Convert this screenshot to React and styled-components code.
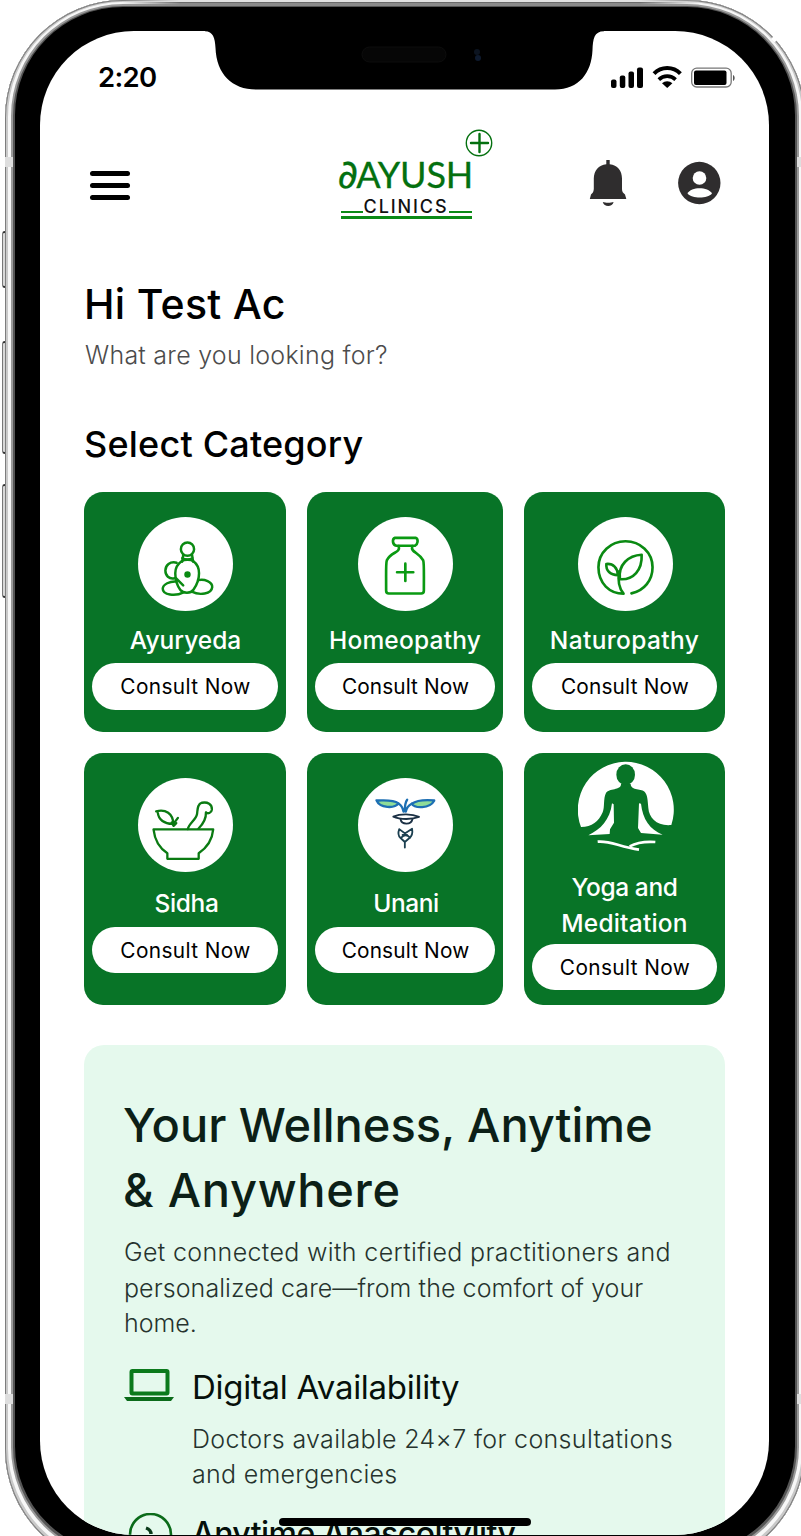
import React from "react";
import styled, { createGlobalStyle } from "styled-components";

const GlobalStyle = createGlobalStyle`
  * { box-sizing: border-box; }
  body {
    margin: 0;
    background: #fff;
    font-family: Inter, "Liberation Sans", sans-serif;
    color: #000;
  }
`;

const Stage = styled.div`
  width: 801px;
  height: 1536px;
  position: relative;
  overflow: hidden;
  background: #fff;
`;

const SideButton = styled.div`
  position: absolute;
  left: 2px;
  top: ${(p) => p.$top}px;
  width: 8px;
  height: ${(p) => p.$height}px;
  border: 1px solid #777;
  border-top: 2px solid #333;
  border-bottom: 2px solid #333;
  border-radius: 3px 0 0 3px;
  background: #d8d8d8;
`;

const Bezel = styled.div`
  position: relative;
  width: 800px;
  height: 1567px;
  margin-left: 5px;
  padding: 31px 36px 32px 35px;
  border-radius: 118px;
  background: #000;
  box-shadow:
    inset 0 0 0 1px #7d7d7d,
    inset 0 -1px 0 3px #c9c9c9,
    inset 0 -2px 0 6px #f7f7f7,
    inset 0 -2px 0 8px #9a9a9a,
    inset 0 -3px 0 10px #555;
`;

const TopEdge = styled.div`
  position: absolute;
  left: 115px;
  right: 105px;
  top: 0;
  height: 7px;
  background: linear-gradient(#e2e2e2 0 2px, #6a6a6a 2px 3px, #8a8a8a 3px 6px, #555 6px 7px);
  mask-image: linear-gradient(90deg, transparent, #000 60px, #000 calc(100% - 60px), transparent);
`;

const EdgeGap = styled.div`
  position: absolute;
  left: 773px;
  top: 34px;
  width: 5px;
  height: 8px;
  background: #fff;
  transform: rotate(45deg);
`;

const Antenna = styled.div`
  position: absolute;
  ${(p) => p.$side}: 0;
  top: ${(p) => p.$top}px;
  width: 8px;
  height: 10px;
  background: #dedede;
`;

const Screen = styled.main`
  position: relative;
  width: 729px;
  height: 1504px;
  overflow: hidden;
  border-radius: 94px;
  background: #fff;
  padding: 0 44px;
`;

const Notch = styled.svg`
  position: absolute;
  left: 165px;
  top: -1px;
`;

const StatusBar = styled.div`
  display: flex;
  justify-content: space-between;
  align-items: center;
  height: 34px;
  margin: 29px -11px 0 14px;
`;

const Clock = styled.span`
  font-size: 27.5px;
  font-weight: 600;
  line-height: 34px;
  letter-spacing: ${(p) => p.$track}px;
`;

const Header = styled.header`
  display: flex;
  justify-content: space-between;
  align-items: flex-start;
  height: 98px;
  margin: 33px 4px 0 6px;
`;

const MenuButton = styled.div`
  display: flex;
  flex-direction: column;
  gap: 7px;
  width: 40px;
  margin-top: 44px;
`;

const MenuBar = styled.span`
  height: 5px;
  border-radius: 3px;
  background: #000;
`;

const Logo = styled.div`
  position: relative;
  width: 134px;
  margin: 30px 0 0 90px;
`;

const LogoName = styled.div`
  display: flex;
  align-items: baseline;
  height: 36px;
  font-family: Lato, sans-serif;
  font-size: 36px;
  font-weight: 400;
  line-height: 35px;
  letter-spacing: ${(p) => p.$track}px;
  color: #04700f;
  -webkit-text-stroke: 0.3px #04700f;
`;

const LogoInitial = styled.span`
  margin-right: -2px;
  font-family: "DejaVu Sans", sans-serif;
  font-size: 40px;
  line-height: 35px;
  letter-spacing: 0;
`;

const LogoSub = styled.div`
  display: flex;
  align-items: flex-end;
  gap: 1px;
  height: 22px;
  margin: 2px 0 0 3px;
  font-size: 18px;
  font-weight: 500;
  line-height: 21px;
  letter-spacing: ${(p) => p.$track}px;
  color: #111;
`;

const LogoDash = styled.span`
  flex: 1;
  height: 2px;
  margin-bottom: 4px;
  background: #0b8a16;
`;

const LogoRule = styled.div`
  height: 2.5px;
  margin: -1px 0 0 3px;
  background: #0b8a16;
`;

const LogoPlus = styled.svg`
  position: absolute;
  right: -21px;
  top: -28px;
`;

const HeaderActions = styled.div`
  display: flex;
  gap: 51px;
  margin-top: 33px;
`;

const Text = styled.span`
  display: block;
  white-space: nowrap;
  letter-spacing: ${(p) => p.$track || 0}px;
`;

const Greeting = styled.h1`
  margin: 54px 0 0;
  font-size: 41px;
  font-weight: 500;
  line-height: 50px;
`;

const Prompt = styled.p`
  margin: 11px 0 0 1px;
  font-size: 25px;
  font-weight: 300;
  line-height: 30px;
  color: #4c4c4c;
`;

const SectionTitle = styled.h2`
  margin: 52px 0 0;
  font-size: 36px;
  font-weight: 500;
  line-height: 44px;
`;

const CategoryGrid = styled.section`
  display: grid;
  grid-template-columns: 202px 196px 201px;
  grid-template-rows: 240px 252px;
  gap: 21px;
  margin-top: 26px;
`;

const Card = styled.article`
  display: flex;
  flex-direction: column;
  align-items: center;
  padding: ${(p) => (p.$tall ? 8 : 25)}px 8px 0;
  border-radius: 19px;
  background: #087427;
`;

const IconDisc = styled.div`
  width: 95px;
  height: 94px;
  margin-left: 1px;
  border-radius: 50%;
  background: ${(p) => (p.$bare ? "transparent" : "#fff")};
  svg { display: block; }
`;

const CardName = styled.h3`
  margin: ${(p) => p.$gap}px 0 0;
  padding-left: ${(p) => p.$nudge || 0}px;
  color: #fff;
  font-size: 24.5px;
  font-weight: 500;
  line-height: 35.5px;
  text-align: center;
`;

const ConsultButton = styled.button`
  width: 100%;
  height: ${(p) => p.$height}px;
  margin-top: ${(p) => p.$gap}px;
  padding: 0 0 0 1px;
  border: 0;
  border-radius: 24px;
  background: #fff;
  color: #000;
  font: 400 20.8px/47px Inter, sans-serif;
`;

const Wellness = styled.section`
  height: 520px;
  margin-top: 40px;
  padding: 47px 40px 0;
  border-radius: 20px 20px 0 0;
  background: #e5f9ed;
`;

const WellnessTitle = styled.h2`
  margin: 0 0 0 -1px;
  font-size: 47px;
  font-weight: 500;
  line-height: 65px;
  color: #0c1f17;
`;

const WellnessText = styled.p`
  margin: 13px 0 0;
  font-size: 25px;
  font-weight: 300;
  line-height: 35.5px;
  color: #26332d;
`;

const Feature = styled.div`
  display: grid;
  grid-template-columns: 50px 1fr;
  column-gap: 18px;
  margin-top: ${(p) => p.$gap}px;
`;

const FeatureTitle = styled.h3`
  margin: 0;
  font-size: ${(p) => p.$size || 33}px;
  font-weight: ${(p) => p.$weight || 420};
  line-height: 42px;
  color: #06100b;
`;

const FeatureText = styled.p`
  margin: 14px 0 0;
  font-size: 25px;
  font-weight: 300;
  line-height: 35.5px;
  color: #26332d;
`;

const HomeBar = styled.div`
  position: absolute;
  left: 239px;
  bottom: 9px;
  width: 252px;
  height: 8px;
  border-radius: 4px;
  background: #000;
`;

const SignalIcons = () => (
  <svg width="126" height="24" viewBox="0 0 126 24">
    <rect x="1" y="14.5" width="5.5" height="8.5" rx="2" />
    <rect x="9.8" y="10.5" width="5.5" height="12.5" rx="2" />
    <rect x="18.5" y="6.5" width="5.5" height="16.5" rx="2" />
    <rect x="27" y="2.5" width="6" height="20.5" rx="2" />
    <g fill="none" stroke="#000" strokeWidth="4">
      <path d="M44 8.600a18.500 18.500 0 0 1 26.400 0" />
      <path d="M48.800 14.600a12 12 0 0 1 16.800 0" strokeWidth="3.600" />
    </g>
    <path d="M52 18.200a7.600 7.600 0 0 1 10.400 0l-5.200 4.800z" />
    <rect x="81.700" y="3.200" width="39.500" height="18.800" rx="5" fill="none" stroke="#777" strokeWidth="1.300" />
    <rect x="84" y="5.500" width="32.500" height="14.500" rx="2" />
    <path d="M123 10v6c2.200-1 2.200-5 0-6z" fill="#555" />
  </svg>
);

const BellIcon = () => (
  <svg width="38" height="48" viewBox="0 0 38 48">
    <path
      d="M17.300 0h3.400v4.200C28.500 5.200 33 10.500 33 18.500V29c0 2.500 1 4 3 5.500L37.300 39H.8L2 34.500C4 33 4.500 31.500 4.800 29V18.500C5 10.500 9.500 5.200 17.300 4.200z"
      fill="#2f2d2e"
    />
    <path d="M13.800 42c2.800 1 7.800 1 10.800 0-1 5.300-9.800 5.300-10.800 0z" fill="#2f2d2e" />
  </svg>
);

const AccountIcon = () => (
  <svg width="43" height="46" viewBox="0 0 43 46">
    <circle cx="21.300" cy="23" r="21.200" fill="#2f2d2e" />
    <circle cx="21.500" cy="18" r="6.800" fill="#fff" />
    <path d="M9.500 33.500C13 26.500 30 26.500 34 33.500c-4.500 5.300-20 5.300-24.500 0z" fill="#fff" />
  </svg>
);

const AyurvedaIcon = () => (
  <svg width="95" height="94" viewBox="175 96 288 284" fill="none" stroke="#0a8a12" strokeWidth="7.500" strokeLinejoin="round" strokeLinecap="round">
    <circle cx="325" cy="193" r="20" />
    <path d="M312 211l-3 20M339 211l3 20M309 220c10 5 22 5 32 0" />
    <path d="M308 229c8-5 28-5 35 1 12 9 17 21 17 36 0 20-6 35-17 50-8 12-31 12-40 0-10-14-15-29-15-50 0-15 7-28 20-37z" />
    <circle cx="325" cy="270" r="6" fill="#0a8a12" />
    <path d="M292 234c-20-5-34 8-34 24 0 15 11 27 28 23M290 281l22 22" />
    <path d="M292 291c-20-2-42 9-42 22 0 19 38 24 63 11M357 287c19-5 44 5 43 21-2 21-38 26-62 14" />
  </svg>
);

const BottleIcon = () => (
  <svg width="95" height="94" viewBox="175 96 285 284" fill="none" stroke="#0a9a12" strokeWidth="8" strokeLinejoin="round" strokeLinecap="round">
    <path d="M286 159h63c8 4 6 20-3 24h-56c-12-3-14-20-4-24z" />
    <path d="M297 184c6 22-22 15-36 43-3 8-2 20-2 92q0 8 8 8h98q8 0 8-8c0-72 1-84-2-92-13-25-39-24-33-43" />
    <path d="M317 237v52M292 263h49" />
  </svg>
);

const LeafIcon = () => (
  <svg width="95" height="94" viewBox="188 95 288 284" fill="none" stroke="#0a8a12" strokeWidth="8" strokeLinejoin="round" strokeLinecap="round">
    <path d="M350 326c39-8 64-40 64-79 0-45-37-79-82-79s-82 34-82 79c0 49 34 80 76 80-14-17-18-39-13-68" />
    <path d="M315 283c-6-44 26-72 66-74 2 46-25 77-66 74zM309 271c-23-1-37-13-35-34 21-2 34 12 35 34z" />
  </svg>
);

const MortarIcon = () => (
  <svg width="95" height="95" viewBox="175 81 288 288" fill="none" stroke="#0a7a12" strokeWidth="7" strokeLinejoin="round" strokeLinecap="round">
    <path d="M222 237h181c-3 33-18 55-44 72v17h-95v-17c-24-15-38-37-42-72z" />
    <path d="M326 236c3-17 25-28 28-46 2-13 0-30 15-34 17-3 31 4 30 21-1 10-13 14-18 8 1 20-8 35-23 50" />
    <path d="M230 182c29-7 51 6 52 38-27 1-45-13-47-34M282 221l14-19" />
    <path d="M277 216l6 10 8-8" />
  </svg>
);

const UnaniIcon = () => (
  <svg width="95" height="95" viewBox="173 81 288 288" fill="none" strokeLinejoin="round" strokeLinecap="round">
    <path d="M229 149c20 1 48-4 67 9-12 16-57 15-67-9zM404 149c-22-2-51-2-68 10 8 14 54 16 68-9z" fill="#8fdc98" stroke="#1d6fb3" strokeWidth="7" />
    <path d="M296 159c11 5 13 14 15 24M336 159c-11 5-16 14-18 24M322 147c-6 8-7 20-7 34" stroke="#1d6fb3" strokeWidth="7" />
    <path d="M280 198c21-9 56-9 78 1-20 8-57 9-78-1z" stroke="#1b3044" strokeWidth="5.500" />
    <path d="M302 206c3 17 32 18 36 0" stroke="#1b3044" strokeWidth="5.500" />
    <path d="M298 236c-4 11-3 21 4 27l13 12 14-12c8-7 10-17 8-28M298 236l24 18M337 235l-29 19M304 262c9-10 18-10 27 0M315 276v16" stroke="#1b3f50" strokeWidth="5.500" />
  </svg>
);

const YogaIcon = () => (
  <svg width="96" height="94" viewBox="188 34 288 282">
    <path
      d="M197 232A144 144 0 1 1 468 226C425 230 401 205 399 175C397 150 396 137 389 128C381 115 347 125 346 103L317 103C318 123 280 115 272 130C263 148 269 173 262 188C250 216 230 232 197 232Z"
      fill="#fff"
    />
    <ellipse cx="331" cy="75" rx="28" ry="31" fill="#087427" />
    <path
      d="M290 161l5 3 1 55-12 20-1 14-64 4c37-18 65-46 71-96zM371 161l6 1c5 46 26 77 65 93l-65-5-9-15z"
      fill="#fff"
    />
    <path
      d="M247 276C284 272 310 291 371 300M343 290C363 279 390 275 420 277"
      fill="none"
      stroke="#fff"
      strokeWidth="8"
    />
  </svg>
);

const LaptopIcon = () => (
  <svg width="50" height="42" viewBox="0 0 50 42">
    <rect x="7.500" y="5" width="36" height="22.500" rx="1" fill="none" stroke="#0b7a1c" strokeWidth="4" />
    <path d="M0 31h50l-3 4H3z" fill="#0b6b1a" />
  </svg>
);

const ClockIcon = () => (
  <svg width="50" height="44" viewBox="0 1 50 44" fill="none">
    <circle cx="26.500" cy="22.500" r="20.500" stroke="#0b6b1a" strokeWidth="2.600" />
    <path d="M22 16c3 1 5 3 5 6" stroke="#0b3b1a" strokeWidth="3.400" />
  </svg>
);

const categories = [
  { lines: [["Ayuryeda", 0]], Icon: AyurvedaIcon, nudge: 1, buttonTrack: 0.4 },
  { lines: [["Homeopathy", 0.2]], Icon: BottleIcon, buttonTrack: 0.1 },
  { lines: [["Naturopathy", 0.35]], Icon: LeafIcon, buttonTrack: 0.2 },
  { lines: [["Sidha", -0.4]], Icon: MortarIcon, second: true, nudge: 3, buttonTrack: 0.4 },
  { lines: [["Unani", -0.4]], Icon: UnaniIcon, second: true, nudge: 2, buttonTrack: 0.15 },
  { lines: [["Yoga and", -0.4], ["Meditation", 0.2]], Icon: YogaIcon, tall: true, buttonTrack: 0.4 },
];

const Category = ({ lines, Icon, tall, second, nudge, buttonTrack }) => (
  <Card $tall={tall}>
    <IconDisc $bare={tall}>
      <Icon />
    </IconDisc>
    <CardName $gap={tall ? 15 : second ? 14 : 12} $nudge={nudge}>
      {lines.map(([line, track]) => (
        <Text key={line} $track={track}>{line}</Text>
      ))}
    </CardName>
    <ConsultButton $gap={tall ? 3 : second ? 5 : 4} $height={tall || second ? 46 : 47}>
      <Text $track={buttonTrack}>Consult Now</Text>
    </ConsultButton>
  </Card>
);

export default function App() {
  return (
    <Stage>
      <GlobalStyle />
      <SideButton $top={231} $height={57} />
      <SideButton $top={341} $height={113} />
      <SideButton $top={484} $height={114} />
      <Bezel>
        <TopEdge />
        <Antenna $side="left" $top={157} />
        <Antenna $side="right" $top={157} />
        <Antenna $side="left" $top={1394} />
        <Antenna $side="right" $top={1394} />
        <Screen>
          <Notch width="400" height="60" viewBox="205 30 400 60">
            <path d="M205 30V31.300C213 31.300 215 38 215.500 48C216.500 74 232 89.500 256 89.500H555C579 89.500 591.500 73 592.500 50C593 39 594 31.300 604 31.300V30Z" />
            <rect x="362" y="47" width="84" height="15" rx="7.500" fill="#060606" stroke="#0d0d0d" />
            <circle cx="477" cy="52" r="3" fill="#0c1420" />
            <circle cx="478" cy="58" r="3" fill="#0e1a2e" />
          </Notch>
          <StatusBar>
            <Clock $track={-0.7}>2:20</Clock>
            <SignalIcons />
          </StatusBar>
          <Header>
            <MenuButton>
              <MenuBar />
              <MenuBar />
              <MenuBar />
            </MenuButton>
            <Logo>
              <LogoPlus width="28" height="28" viewBox="0 0 28 28" fill="none" stroke="#04700f">
                <circle cx="14" cy="14" r="12.700" strokeWidth="1.400" />
                <path d="M14.500 5v18M6 14h17" strokeWidth="2.400" strokeLinecap="round" />
              </LogoPlus>
              <LogoName $track={-0.2}>
                <LogoInitial>∂</LogoInitial>AYUSH
              </LogoName>
              <LogoSub $track={1.9}>
                <LogoDash />
                CLINICS
                <LogoDash />
              </LogoSub>
              <LogoRule />
            </Logo>
            <HeaderActions>
              <BellIcon />
              <AccountIcon />
            </HeaderActions>
          </Header>
          <Greeting>
            <Text $track={0.3}>Hi Test Ac</Text>
          </Greeting>
          <Prompt>
            <Text $track={0.25}>What are you looking for?</Text>
          </Prompt>
          <SectionTitle>
            <Text $track={0.2}>Select Category</Text>
          </SectionTitle>
          <CategoryGrid>
            {categories.map((c) => (
              <Category key={c.lines[0][0]} {...c} />
            ))}
          </CategoryGrid>
          <Wellness>
            <WellnessTitle>
              <Text $track={-0.05}>Your Wellness, Anytime</Text>
              <Text $track={0.7}>&amp; Anywhere</Text>
            </WellnessTitle>
            <WellnessText>
              <Text $track={0.36}>Get connected with certified practitioners and</Text>
              <Text $track={0.07}>personalized care—from the comfort of your</Text>
              <Text>home.</Text>
            </WellnessText>
            <Feature $gap={24}>
              <LaptopIcon />
              <div>
                <FeatureTitle>
                  <Text $track={-0.28}>Digital Availability</Text>
                </FeatureTitle>
                <FeatureText>
                  <Text $track={0.33}>Doctors available 24×7 for consultations</Text>
                  <Text $track={0.28}>and emergencies</Text>
                </FeatureText>
              </div>
            </Feature>
            <Feature $gap={20}>
              <ClockIcon />
              <FeatureTitle $weight={500} $size={32}>
                <Text $track={-0.55}>Anytime Anascoltylity</Text>
              </FeatureTitle>
            </Feature>
          </Wellness>
          <HomeBar />
        </Screen>
      </Bezel>
      <EdgeGap />
    </Stage>
  );
}
